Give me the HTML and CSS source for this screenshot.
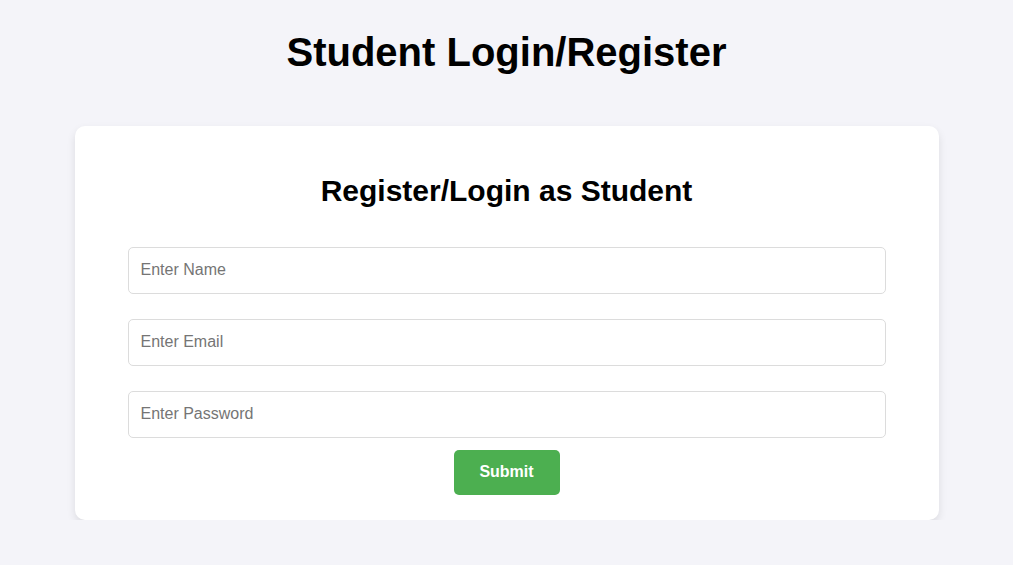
FILE: index.html
```html
<!DOCTYPE html>
<html lang="en">
<head>
<meta charset="utf-8">
<title>Student Login/Register</title>
<link rel="stylesheet" href="styles.css">
</head>
<body>
<h1 class="page-title">Student Login/Register</h1>
<div class="card">
  <h2 class="card-title">Register/Login as Student</h2>
  <form class="form">
    <input class="field" type="text" placeholder="Enter Name">
    <input class="field" type="email" placeholder="Enter Email">
    <input class="field" type="password" placeholder="Enter Password">
    <button class="submit" type="button">Submit</button>
  </form>
</div>
</body>
</html>
```
FILE: styles.css
```css
* { box-sizing: border-box; }
html, body { margin: 0; padding: 0; }
body {
  background: #f4f4f9;
  font-family: "Liberation Sans", Arial, sans-serif;
  color: #000;
}
.page-title {
  font-size: 40px;
  font-weight: bold;
  text-align: center;
  line-height: 46px;
  margin: 29px 0 51px;
}
.card {
  width: 864px;
  margin: 0 auto;
  background: #fff;
  border-radius: 10px;
  box-shadow: 0 4px 8px rgba(0, 0, 0, 0.1);
  padding: 48px 53px 25px;
}
.card-title {
  font-size: 30px;
  font-weight: bold;
  text-align: center;
  line-height: 34px;
  margin: 0 0 39px;
}
.form {
  display: flex;
  flex-direction: column;
  align-items: center;
}
.field {
  width: 100%;
  height: 47px;
  border: 1px solid #dcdcdc;
  border-radius: 5px;
  padding: 0 12px 2px;
  font-family: inherit;
  font-size: 16px;
  color: #000;
  margin-bottom: 25px;
  outline: none;
}
.field:last-of-type { margin-bottom: 12px; }
.field::placeholder { color: #757575; }
.submit {
  width: 106px;
  height: 45px;
  padding: 0 0 1px;
  background: #4caf50;
  color: #fff;
  border: none;
  border-radius: 5px;
  font-family: inherit;
  font-size: 16px;
  font-weight: bold;
  cursor: pointer;
}
```
